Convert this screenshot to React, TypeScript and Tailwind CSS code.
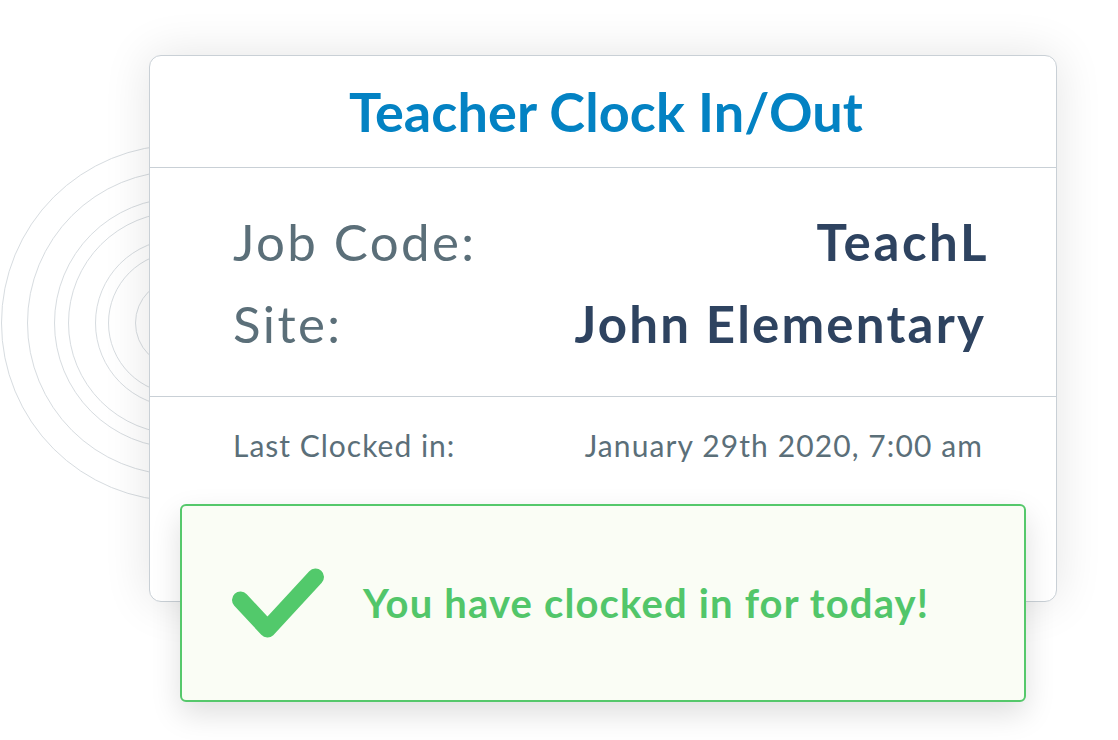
import React from "react";

const radii = [178, 152, 125, 111, 84, 71, 44];

export default function App() {
  return (
    <div
      className="relative w-[1118px] h-[740px] overflow-hidden bg-white pl-[149px] pt-[55px]"
      style={{ fontFamily: "Lato, 'Open Sans', sans-serif" }}
    >
      <svg
        className="absolute left-0 top-0"
        width="400"
        height="600"
        viewBox="0 0 400 600"
        fill="none"
      >
        {radii.map((r) => (
          <circle key={r} cx="179.5" cy="323" r={r} stroke="#d7dce0" strokeWidth="1" />
        ))}
      </svg>

      <div className="relative w-[908px]">
        <div className="rounded-[12px] border border-[#c9d0d6] bg-white shadow-[0_0_48px_rgba(0,0,0,0.11)]">
          <div className="flex h-[112px] items-center justify-center border-b border-[#c9d0d6]">
            <h1 className="pl-[6px] text-[54px] font-bold leading-none tracking-[0.1px] text-[#0382c3]">
              Teacher Clock In/Out
            </h1>
          </div>

          <div className="border-b border-[#c9d0d6] pl-[83px] pr-[67px] pt-[33px] pb-[31px]">
            <div className="flex h-[82px] items-center justify-between text-[51px] leading-[82px]">
              <span className="tracking-[2.4px] text-[#5b6f79]">Job Code:</span>
              <span className="tracking-[2.6px] font-bold text-[#2e4360]">TeachL</span>
            </div>
            <div className="flex h-[82px] items-center justify-between text-[51px] leading-[82px]">
              <span className="tracking-[2.4px] text-[#5b6f79]">Site:</span>
              <span className="pr-[3px] tracking-[2.2px] font-bold text-[#2e4360]">John Elementary</span>
            </div>
          </div>

          <div className="h-[204px] pl-[83px] pr-[73px] pt-[28px]">
            <div className="flex items-center justify-between text-[30px] leading-[40px] text-[#5b6f79]">
              <span className="tracking-[1px]">Last Clocked in:</span>
              <span className="tracking-[1.1px]">January 29th 2020, 7:00 am</span>
            </div>
          </div>
        </div>

        <div className="relative mx-[31px] -mt-[98px] flex h-[198px] items-center rounded-[6px] border-2 border-[#55c86b] bg-[#fafdf5] pl-[48px] shadow-[0_12px_30px_rgba(0,0,0,0.13)]">
          <svg width="96" height="73" viewBox="0 0 96 73" fill="none">
            <polyline
              points="10.5,33 37.5,62 85.5,10"
              stroke="#52c96b"
              strokeWidth="17"
              strokeLinecap="round"
              strokeLinejoin="round"
            />
          </svg>
          <span className="ml-[37px] text-[40px] font-bold leading-none tracking-[1.15px] text-[#52c66a]">
            You have clocked in for today!
          </span>
        </div>
      </div>
    </div>
  );
}
